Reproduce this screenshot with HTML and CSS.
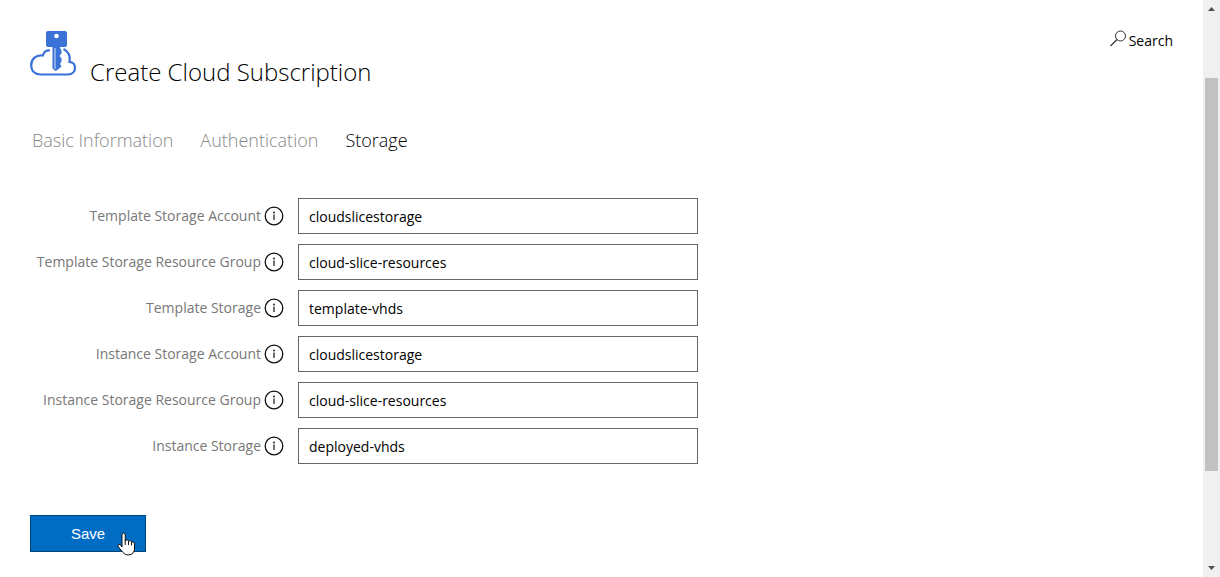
FILE: index.html
```html
<!DOCTYPE html>
<html lang="en">
<head>
<meta charset="utf-8">
<title>Create Cloud Subscription</title>
<link rel="stylesheet" href="styles.css">
</head>
<body>
<main class="page">
  <header class="header">
    <svg class="logo" viewBox="0 0 48 48" aria-hidden="true">
      <path d="M20 20.500C16.500 20 14 22 12.800 25.500C6 24.500 1.200 29 1.200 35C1.200 41 5 44.500 10.500 44.500H38C42.500 44.500 45 41.500 45 38C45 34.500 43 32.200 39.500 32C40.500 26 38.500 21.500 33.500 19" fill="none" stroke="#3a72d8" stroke-width="2.200"/>
      <path fill-rule="evenodd" fill="#3a72d8" d="M18 1H35Q37 1 37 3V15Q37 17 35 17H18Q16 17 16 15V3Q16 1 18 1ZM26.500 3.700A2.300 2.300 0 1 0 26.500 8.300A2.300 2.300 0 1 0 26.500 3.700Z"/>
      <path d="M22.500 16V38.500L25.500 41L28 39.500L31.500 36.500L30 34L31.500 31.500V28.500L29.500 26L31.500 23.500V20.500L30 18V16Z" fill="#3a72d8"/>
      <path d="M25 18V39" stroke="#fff" stroke-width=".8"/>
    </svg>
    <h1 class="title">Create Cloud Subscription</h1>
    <a class="search" href="#search">
      <svg class="search-icon" viewBox="0 0 17 17" aria-hidden="true">
        <circle cx="10.500" cy="6" r="5" fill="none" stroke="#333" stroke-width="1"/>
        <path d="M7 9.500L.5 16" stroke="#333" stroke-width="1.200"/>
      </svg>
      <span>Search</span>
    </a>
  </header>
  <nav class="tabs">
    <a class="tab" href="#basic">Basic Information</a>
    <a class="tab" href="#authentication">Authentication</a>
    <a class="tab tab-active" href="#storage" aria-current="page">Storage</a>
  </nav>
  <form class="form">
    <div class="fields">
      <label class="label" for="tsa">Template Storage Account</label>
      <svg class="info" viewBox="0 0 20 20"><use href="#info"/></svg>
      <input class="input" id="tsa" type="text" value="cloudslicestorage">
      <label class="label" for="tsrg">Template Storage Resource Group</label>
      <svg class="info" viewBox="0 0 20 20"><use href="#info"/></svg>
      <input class="input" id="tsrg" type="text" value="cloud-slice-resources">
      <label class="label" for="ts">Template Storage</label>
      <svg class="info" viewBox="0 0 20 20"><use href="#info"/></svg>
      <input class="input" id="ts" type="text" value="template-vhds">
      <label class="label" for="isa">Instance Storage Account</label>
      <svg class="info" viewBox="0 0 20 20"><use href="#info"/></svg>
      <input class="input" id="isa" type="text" value="cloudslicestorage">
      <label class="label" for="isrg">Instance Storage Resource Group</label>
      <svg class="info" viewBox="0 0 20 20"><use href="#info"/></svg>
      <input class="input" id="isrg" type="text" value="cloud-slice-resources">
      <label class="label" for="is">Instance Storage</label>
      <svg class="info" viewBox="0 0 20 20"><use href="#info"/></svg>
      <input class="input" id="is" type="text" value="deployed-vhds">
    </div>
    <div class="actions">
      <button class="save" type="button">Save</button>
      <svg class="pointer" viewBox="0 0 19 24" aria-hidden="true">
        <path d="M5 15V3Q5 1 6.500 1T8.200 3V8.500Q10.800 7 11.500 9Q13.800 7.800 14.500 10Q17.500 9 17.500 12V17Q17.500 19 16 21Q14.500 23 11 23Q8 23 6 20.500L1.500 15Q0 13 2 12.200Q3.500 12 5 15Z" fill="#fff" stroke="#111" stroke-width="1"/>
        <path d="M8.200 8V13M11.500 9V13M14.500 10V13.500" stroke="#111" stroke-width="1"/>
      </svg>
    </div>
  </form>
</main>
<div class="scrollbar" aria-hidden="true">
  <svg class="arrow" viewBox="0 0 17 17"><path d="M5 11L8.500 7L12 11Z" fill="#505050"/></svg>
  <div class="track"><div class="thumb"></div></div>
  <svg class="arrow" viewBox="0 0 17 17"><path d="M5 6L8.500 10L12 6Z" fill="#505050"/></svg>
</div>
<svg class="symbols" aria-hidden="true">
  <symbol id="info" viewBox="0 0 20 20">
    <circle cx="10" cy="10" r="8.800" fill="none" stroke="#111" stroke-width="1.300"/>
    <path d="M10 8.500V14" stroke="#111" stroke-width="1.200"/>
    <circle cx="10" cy="6.500" r=".9" fill="#111"/>
  </symbol>
</svg>
</body>
</html>
```
FILE: styles.css
```css
* {
  box-sizing: border-box;
}

body {
  margin: 0;
  display: flex;
  height: 100vh;
  overflow: hidden;
  background: #fff;
  color: #000;
  font-family: "Open Sans", "Noto Sans", sans-serif;
  font-size: 14px;
}

.page {
  flex: 1;
  min-width: 0;
  padding: 30px 30px 0;
}

.header {
  display: flex;
  align-items: flex-start;
}

.logo {
  width: 48px;
  height: 48px;
}

.title {
  flex: 1;
  margin: 24px 0 0 12px;
  font-size: 24px;
  line-height: 36px;
  font-weight: 300;
}

.search {
  display: flex;
  gap: 2px;
  color: #000;
  line-height: 22px;
  text-decoration: none;
}

.search-icon {
  width: 17px;
  height: 17px;
}

.tabs {
  display: flex;
  gap: 27px;
  margin-top: 36px;
  padding-left: 2px;
  font-size: 18px;
  line-height: 28px;
  font-weight: 300;
}

.tab {
  color: #888;
  text-decoration: none;
}

.tab-active {
  color: #000;
}

.fields {
  display: grid;
  grid-template-columns: 231px 20px minmax(0, 411px);
  column-gap: 3px;
  row-gap: 10px;
  align-items: center;
  margin-top: 44px;
}

.label {
  padding-bottom: 2px;
  color: #777;
  text-align: right;
  white-space: nowrap;
}

.info {
  width: 20px;
  height: 20px;
}

.input {
  width: calc(100% - 11px);
  height: 36px;
  margin-left: 11px;
  padding: 0 10px;
  border: 1px solid #666;
  background: #fff;
  color: #000;
  font: inherit;
}

.actions {
  position: relative;
  width: 116px;
  margin-top: 51px;
}

.save {
  display: block;
  width: 100%;
  height: 37px;
  border: 1px solid #004578;
  background: #006cc4;
  color: #fff;
  font: 15px "Liberation Sans", Arial, sans-serif;
}

.pointer {
  position: absolute;
  left: 87px;
  top: 17px;
  width: 19px;
  height: 24px;
}

.scrollbar {
  display: flex;
  flex-direction: column;
  width: 17px;
  background: #f0f0f0;
}

.arrow {
  width: 17px;
  height: 17px;
}

.track {
  flex: 1;
  padding: 61px 2px 0;
}

.thumb {
  height: 81.5%;
  background: #c1c1c1;
}

.symbols {
  display: none;
}
```
